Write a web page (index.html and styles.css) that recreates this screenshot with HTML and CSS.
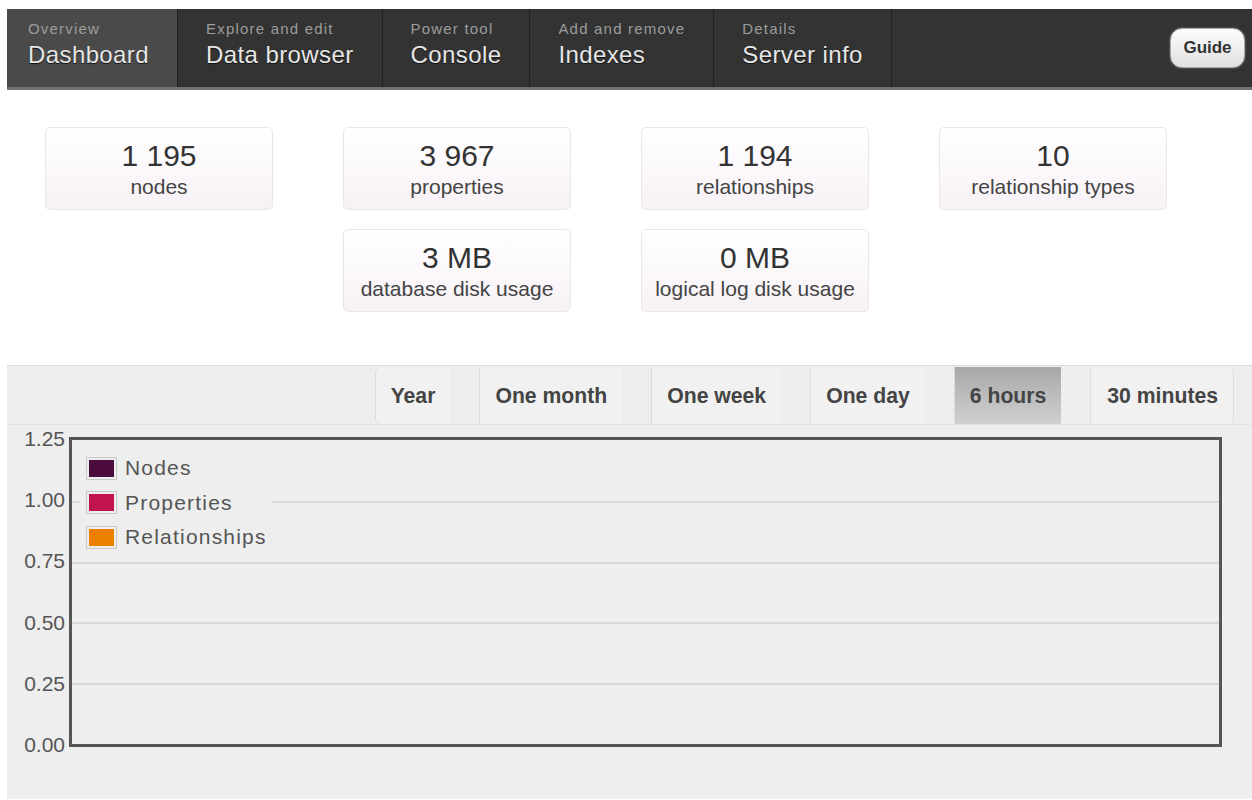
FILE: index.html
```html
<!DOCTYPE html>
<html lang="en">
<head>
<meta charset="utf-8">
<title>Dashboard</title>
<link rel="stylesheet" href="styles.css">
</head>
<body>
<header class="topbar">
  <nav class="tabs">
    <a class="tab tab-first is-active" href="#dashboard">
      <span class="tab-hint">Overview</span>
      <span class="tab-title">Dashboard</span>
    </a>
    <a class="tab" href="#data">
      <span class="tab-hint">Explore and edit</span>
      <span class="tab-title">Data browser</span>
    </a>
    <a class="tab" href="#console">
      <span class="tab-hint">Power tool</span>
      <span class="tab-title">Console</span>
    </a>
    <a class="tab" href="#indexes">
      <span class="tab-hint">Add and remove</span>
      <span class="tab-title">Indexes</span>
    </a>
    <a class="tab" href="#info">
      <span class="tab-hint">Details</span>
      <span class="tab-title">Server info</span>
    </a>
  </nav>
  <button class="guide" type="button">Guide</button>
</header>

<main>
  <section class="stats">
    <div class="stat"><div class="stat-value">1 195</div><div class="stat-label">nodes</div></div>
    <div class="stat"><div class="stat-value">3 967</div><div class="stat-label">properties</div></div>
    <div class="stat"><div class="stat-value">1 194</div><div class="stat-label">relationships</div></div>
    <div class="stat"><div class="stat-value">10</div><div class="stat-label">relationship types</div></div>
    <div class="stat stat-col2"><div class="stat-value">3 MB</div><div class="stat-label">database disk usage</div></div>
    <div class="stat stat-col3"><div class="stat-value">0 MB</div><div class="stat-label">logical log disk usage</div></div>
  </section>

  <section class="monitor">
    <div class="ranges">
      <button class="range range-first" type="button"><span>Year</span></button>
      <button class="range" type="button"><span>One month</span></button>
      <button class="range" type="button"><span>One week</span></button>
      <button class="range" type="button"><span>One day</span></button>
      <button class="range is-active" type="button"><span>6 hours</span></button>
      <button class="range range-last" type="button"><span>30 minutes</span></button>
    </div>

    <div class="chart">
      <div class="yaxis">
        <span>1.25</span>
        <span>1.00</span>
        <span>0.75</span>
        <span>0.50</span>
        <span>0.25</span>
        <span>0.00</span>
      </div>
      <div class="plot">
        <div class="plot-row"></div>
        <div class="plot-row"></div>
        <div class="plot-row"></div>
        <div class="plot-row"></div>
        <div class="plot-row"></div>
        <ul class="legend">
          <li><span class="swatch"><i class="swatch-nodes"></i></span>Nodes</li>
          <li><span class="swatch"><i class="swatch-props"></i></span>Properties</li>
          <li><span class="swatch"><i class="swatch-rels"></i></span>Relationships</li>
        </ul>
      </div>
    </div>
  </section>
</main>
</body>
</html>
```

FILE: styles.css
```css
* {
  box-sizing: border-box;
}

html, body {
  margin: 0;
  background: #fff;
}

body {
  padding: 9px 0 0 7px;
  font-family: "Liberation Sans", Arial, sans-serif;
  color: #333;
}

/* ---------- top navigation ---------- */

.topbar {
  display: flex;
  align-items: stretch;
  height: 81px;
  background: #333;
  border-bottom: 3px solid #727272;
}

.tabs {
  display: flex;
}

.tab {
  display: flex;
  flex-direction: column;
  padding: 11px 28px 0;
  border-right: 1px solid #212121;
  text-decoration: none;
}

.tab-first {
  padding-left: 21px;
}

.tab.is-active {
  background: #4a4a4a;
}

.tab-hint {
  font-size: 15px;
  line-height: 17px;
  letter-spacing: 1.2px;
  color: #9c9c9c;
  white-space: nowrap;
}

.tab-title {
  margin-top: 4px;
  font-size: 24px;
  line-height: 28px;
  letter-spacing: 0.4px;
  color: #e6e6e6;
  text-shadow: 0 1px 1px #111;
  white-space: nowrap;
}

.guide {
  align-self: center;
  margin: 0 7px 0 auto;
  width: 75px;
  height: 40px;
  padding: 0;
  border: 1px solid #a8a8a8;
  border-radius: 12px;
  background: linear-gradient(#fdfdfd, #e0e0e0);
  box-shadow: 0 0 2px rgba(255, 255, 255, 0.4);
  font-family: inherit;
  font-weight: bold;
  font-size: 17px;
  color: #333;
}

/* ---------- counters ---------- */

.stats {
  display: grid;
  grid-template-columns: repeat(4, 228px);
  column-gap: 70px;
  row-gap: 19px;
  margin: 37px 0 0 38px;
}

.stat {
  height: 83px;
  padding-top: 12px;
  border: 1px solid #ece6eb;
  border-radius: 5px;
  background: linear-gradient(#fff, #f7f1f6);
  text-align: center;
}

.stat-col2 {
  grid-column: 2;
}

.stat-col3 {
  grid-column: 3;
}

.stat-value {
  font-size: 30px;
  line-height: 32px;
  color: #333;
}

.stat-label {
  margin-top: 2px;
  font-size: 21px;
  line-height: 26px;
  color: #444;
  white-space: nowrap;
}

/* ---------- monitor chart ---------- */

.monitor {
  margin-top: 53px;
  height: 434px;
  background: #eee;
  border-top: 1px solid #dcdcdc;
}

.ranges {
  display: flex;
  justify-content: flex-end;
  padding: 1px 18px 0 0;
  border-bottom: 1px solid #e3e3e3;
}

.range {
  display: flex;
  height: 57px;
  padding: 0 29px 0 0;
  margin: 0;
  border: 0;
  border-left: 1px solid #dcdcdc;
  background: #ededed;
  font-family: inherit;
  font-weight: bold;
  font-size: 21.2px;
  color: #444;
  cursor: pointer;
}

.range span {
  display: block;
  padding: 0 15px;
  line-height: 57px;
  background: #f1f1f1;
  white-space: nowrap;
}

.range-first {
  border-radius: 6px 0 0 6px;
}

.range-first span {
  border-radius: 6px 0 0 6px;
}

.range-last {
  padding-right: 0;
  border-right: 1px solid #dcdcdc;
  border-radius: 0 6px 6px 0;
}

.range-last span {
  padding: 0 15px 0 16px;
  border-radius: 0 6px 6px 0;
}

.range.is-active {
  background: #eee;
}

.range.is-active span {
  background: linear-gradient(#a8a8a8, #d0d0d0);
}

.chart {
  display: flex;
  padding-top: 12px;
}

.yaxis {
  display: flex;
  flex-direction: column;
  justify-content: space-between;
  width: 62px;
  height: 310px;
  padding: 1.5px 4px 1.5px 0;
  text-align: right;
  font-size: 21px;
  color: #555;
}

.yaxis span {
  display: block;
  height: 0;
  line-height: 0;
}

.plot {
  position: relative;
  display: grid;
  grid-template-rows: repeat(5, 1fr);
  width: 1153px;
  height: 310px;
  border: 3px solid #555;
}

.plot-row + .plot-row {
  border-top: 2px solid #d8d8d8;
}

.legend {
  position: absolute;
  top: 11px;
  left: 8px;
  margin: 0;
  padding: 0 5px 0 6px;
  list-style: none;
  background: #eee;
}

.legend li {
  display: flex;
  align-items: center;
  height: 34.5px;
  font-size: 21px;
  letter-spacing: 1.2px;
  color: #555;
  white-space: nowrap;
}

.swatch {
  display: block;
  margin-right: 8px;
  padding: 2px;
  border: 1px solid #c8c8c8;
}

.swatch i {
  display: block;
  width: 25px;
  height: 17px;
}

.swatch-nodes {
  background: #4c0b3d;
}

.swatch-props {
  background: #c1134f;
}

.swatch-rels {
  background: #ea7f00;
}
```
